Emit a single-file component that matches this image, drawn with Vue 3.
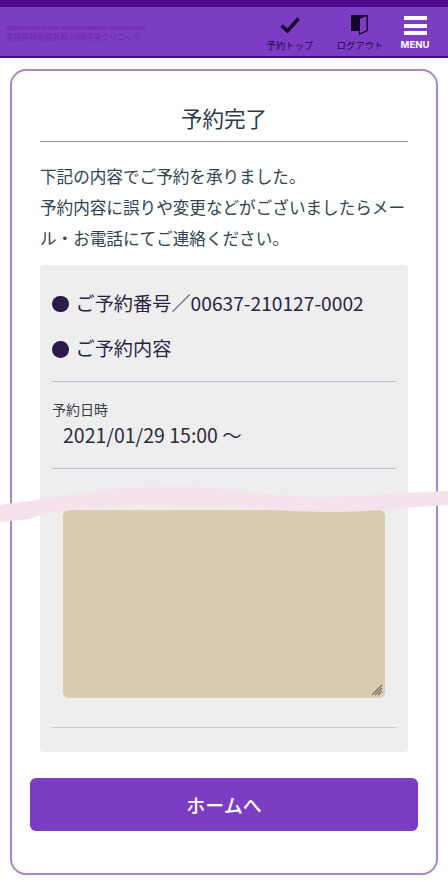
<script setup>
const infoRows = ['ご予約番号／00637-210127-0002', 'ご予約内容']
</script>

<template>
  <div class="page">
    <header class="header">
      <div class="logo">
        <div class="logo-en">COSMETIC AND PLASTIC SURGERY KAWASAKI CENTRAL CLINIC</div>
        <div class="logo-ja">美容外科形成外科 川崎中央クリニック</div>
      </div>
      <nav class="nav">
        <div class="nav-item check">
          <svg class="nav-icon" width="20" height="17" viewBox="0 0 20 17"><path d="M1.500 8.500 L7.500 14 L18.500 1.500" fill="none" stroke="#14082a" stroke-width="3.6"/></svg>
          <span>予約トップ</span>
        </div>
        <div class="nav-item logout">
          <svg class="nav-icon" width="20" height="22" viewBox="0 0 20 22"><path d="M1 1H18V17L9 21V17H1Z" fill="#14082a"/><path d="M9.500 4.500L17 1.500V16.500L9.500 20Z" fill="#7c3cc4" stroke="#14082a" stroke-width="1"/></svg>
          <span>ログアウト</span>
        </div>
        <div class="nav-item menu">
          <div class="bars"><i></i><i></i><i></i></div>
          <span>MENU</span>
        </div>
      </nav>
    </header>

    <main class="card">
      <h1 class="title">予約完了</h1>
      <p class="lead">下記の内容でご予約を承りました。<br>予約内容に誤りや変更などがございましたらメール・お電話にてご連絡ください。</p>
      <section class="panel">
        <div v-for="row in infoRows" :key="row" class="info-row">
          <span class="dot"></span>{{ row }}
        </div>
        <div class="field">
          <div class="label">予約日時</div>
          <div class="value">2021/01/29 15:00 〜</div>
        </div>
        <div class="memo-wrap">
          <div class="memo">
            <svg class="grip" width="12" height="12" viewBox="0 0 12 12"><path d="M11 1 1 11M11 4 4 11M11 7 7 11" stroke="#77705f" stroke-width="1.200" fill="none"/></svg>
          </div>
        </div>
      </section>
      <button class="home" type="button">ホームへ</button>
    </main>

    <svg class="wave" width="448" height="40" viewBox="0 0 448 40">
      <path d="M0 19 L35 14 C70 8 105 3 130 2 C155 1 175 0 190 1 C215 2 235 4 250 6 C280 9 310 12 333 11 C360 10 385 8 400 7 L448 5 V19 L400 22 C375 25 350 26 333 26 C310 26 290 25 270 24 C245 21 220 20 200 20 L140 19 C125 19 110 20 100 22 C80 23 60 25 45 27 L30 33 L0 36Z" fill="#f4e3ec"/>
    </svg>
  </div>
</template>

<style scoped>
.page {
  position: relative;
  width: 448px;
  height: 882px;
  overflow: hidden;
  background: #fff;
  font-family: "Noto Sans CJK JP", "Noto Sans", sans-serif;
  color: #2f3d4a;
}
.header {
  box-sizing: border-box;
  height: 58px;
  background: #7c3cc4;
  border-top: 7px solid #4c0a8f;
  border-bottom: 2px solid #4c0a8f;
  display: flex;
  justify-content: space-between;
}
.logo { padding: 18px 0 0 6px; color: #6a1f9c; }
.logo-en { font-size: 4.5px; line-height: 7px; white-space: nowrap; font-family: "Liberation Sans", sans-serif; }
.logo-ja { font-size: 7.800px; line-height: 10px; white-space: nowrap; color: #6b25a5; }
.nav { display: flex; align-items: flex-start; padding-right: 17px; }
.nav-item {
  display: flex;
  flex-direction: column;
  align-items: center;
  color: #1d0d3e;
  font-size: 9.400px;
  line-height: 10px;
  white-space: nowrap;
}
.check { width: 52px; padding-top: 10px; margin-right: 18px; }
.check .nav-icon { margin-bottom: 6px; }
.logout { width: 52px; padding-top: 7px; margin-right: 13px; }
.logout .nav-icon { margin-bottom: 4px; }
.menu { width: 32px; padding-top: 9px; color: #fff; font-weight: 700; font-size: 9.500px; font-family: "Inter", "Liberation Sans", sans-serif; }
.bars { display: flex; flex-direction: column; gap: 3.500px; margin-bottom: 5px; }
.bars i { display: block; width: 23px; height: 4px; background: #fff; }

.card {
  box-sizing: border-box;
  width: 428px;
  height: 806px;
  margin: 11px 0 0 10px;
  border: 2px solid #a986c4;
  border-radius: 16px;
  padding: 22px 18px 0;
}
.title {
  margin: 0 10px;
  height: 49px;
  box-sizing: border-box;
  border-bottom: 1px solid #9a9a9f;
  text-align: center;
  font-size: 21.500px;
  font-weight: 400;
  line-height: 49px;
  color: #2c3a46;
}
.lead {
  margin: 19px 10px 0;
  font-size: 16.600px;
  line-height: 31px;
  color: #2f4350;
}
.panel {
  box-sizing: border-box;
  margin: 11px 10px 0;
  height: 487px;
  background: #eeeeee;
  border-radius: 4px;
  padding: 15px 12px 0;
}
.info-row {
  display: flex;
  align-items: center;
  height: 45.500px;
  font-size: 19.200px;
  color: #2b1f45;
  white-space: nowrap;
}
.dot {
  width: 16.500px;
  height: 16.500px;
  border-radius: 50%;
  background: #2b1a4a;
  margin: 2px 7px 0 0;
}
.field { border-top: 1px solid #cbb4da; border-bottom: 1px solid #cbb4da; height: 88px; box-sizing: border-box; padding-top: 17px; margin-top: 10px; }
.label { font-size: 14px; line-height: 20px; color: #3a3a48; }
.value { font-size: 19.500px; line-height: 32px; padding-left: 11px; color: #2b2b3a; }
.memo-wrap { height: 259px; box-sizing: border-box; padding: 41px 11px 0; border-bottom: 1px solid #d0c2d8; }
.memo {
  position: relative;
  height: 188px;
  background: #d9ccb3;
  border-radius: 6px;
}
.grip { position: absolute; right: 2px; bottom: 2px; }
.home {
  display: block;
  width: 388px;
  height: 53px;
  margin: 26px 0 0;
  border: none;
  border-radius: 6px;
  background: #7c3cc4;
  color: #fff;
  font-family: inherit;
  font-size: 19px;
  font-weight: 500;
}
.wave { position: absolute; left: 0; top: 486px; }
</style>
